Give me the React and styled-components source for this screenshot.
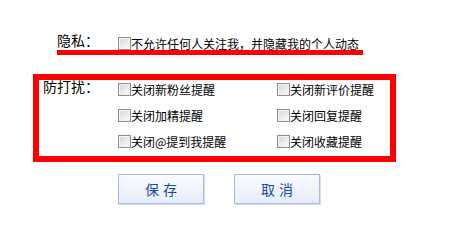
import React from "react";
import styled, { createGlobalStyle } from "styled-components";

const Global = createGlobalStyle`
  html, body { margin: 0; padding: 0; background: #fff; }
  body { font-family: "Noto Sans CJK SC", "Liberation Sans", sans-serif; color: #000; }
`;

const Page = styled.div`
  width: 451px;
  height: 227px;
  padding-top: 32px;
  box-sizing: border-box;
`;

const PrivacyRow = styled.div`
  display: flex;
  align-items: flex-start;
  margin-left: 57px;
  width: 306px;
  height: 18px;
  border-bottom: 5px solid #ff0000;
`;

const Label = styled.div`
  width: ${(p) => p.$width}px;
  padding-left: ${(p) => p.$indent || 0}px;
  box-sizing: border-box;
  font-size: 14px;
  line-height: ${(p) => p.$lh || 16}px;
  flex-shrink: 0;
`;

const Option = styled.label`
  display: flex;
  align-items: center;
  font-size: 12px;
  line-height: 13px;
  height: 13px;
  white-space: nowrap;
  margin-top: ${(p) => p.$top || 0}px;
`;

const Box = styled.input.attrs({ type: "checkbox" })`
  appearance: none;
  -webkit-appearance: none;
  margin: 0;
  width: 13px;
  height: 13px;
  box-sizing: border-box;
  border: 1px solid #8e8e8e;
  background: linear-gradient(135deg, #d4d4d4 0%, #ececec 55%, #fbfbfb 100%);
  box-shadow: inset 1px 1px 0 #f4f4f4;
  flex-shrink: 0;
`;

const Disturb = styled.div`
  display: flex;
  align-items: flex-start;
  margin: 19px 0 0 33px;
  width: 363px;
  height: 88px;
  box-sizing: border-box;
  border: 6px solid #ff0000;
`;

const OptionGrid = styled.div`
  display: grid;
  grid-template-columns: 159px 100px;
  grid-auto-rows: 13px;
  row-gap: 13px;
  padding-top: 3px;
`;

const Buttons = styled.div`
  display: flex;
  gap: 30px;
  margin: 12px 0 0 118px;
`;

const Button = styled.button`
  width: 86px;
  height: 30px;
  box-sizing: border-box;
  border: 1px solid #a9bbe2;
  box-shadow: 1px 1px 0 #d5def1;
  background: linear-gradient(to bottom, #f9fbff 0%, #eef3fb 60%, #e6edf9 100%);
  color: #1b4aa6;
  font-family: "Noto Sans CJK SC", sans-serif;
  font-size: 14px;
  letter-spacing: 4px;
  text-indent: 4px;
  padding: 0;
  line-height: 28px;
`;

const disturbOptions = [
  "关闭新粉丝提醒",
  "关闭新评价提醒",
  "关闭加精提醒",
  "关闭回复提醒",
  "关闭@提到我提醒",
  "关闭收藏提醒",
];

export default function App() {
  return (
    <Page>
      <Global />
      <PrivacyRow>
        <Label $width={61}>隐私：</Label>
        <Option $top={5}>
          <Box />
          不允许任何人关注我，并隐藏我的个人动态
        </Option>
      </PrivacyRow>
      <Disturb>
        <Label $width={79} $indent={4} $lh={13}>防打扰：</Label>
        <OptionGrid>
          {disturbOptions.map((t) => (
            <Option key={t}>
              <Box />
              {t}
            </Option>
          ))}
        </OptionGrid>
      </Disturb>
      <Buttons>
        <Button>保存</Button>
        <Button>取消</Button>
      </Buttons>
    </Page>
  );
}
